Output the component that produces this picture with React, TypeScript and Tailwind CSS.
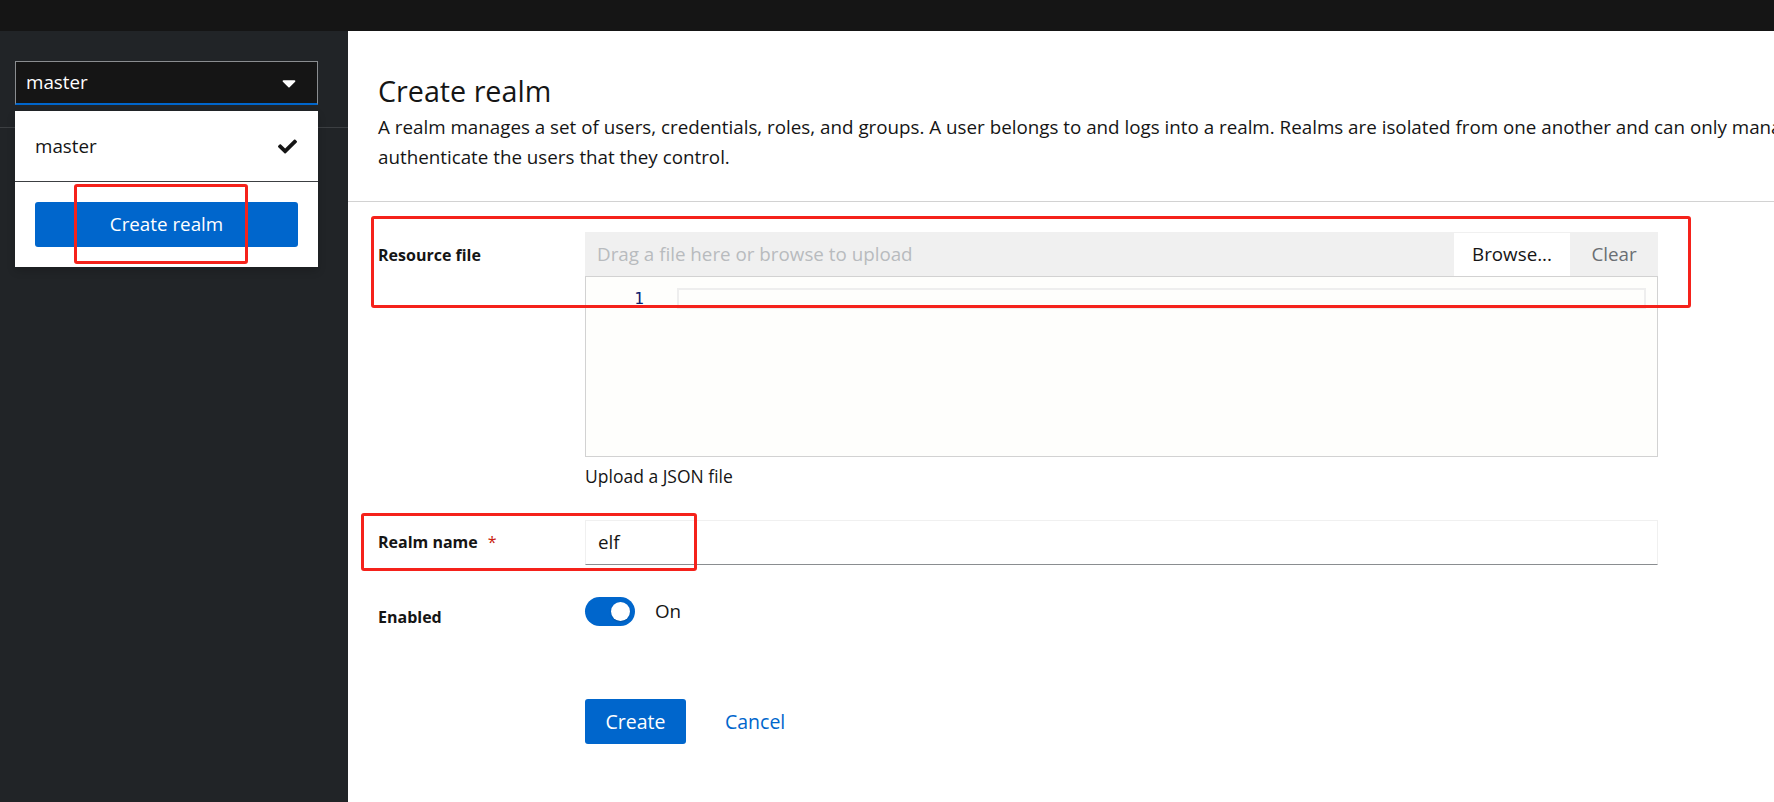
import React from 'react';

const font = { fontFamily: '"Open Sans", "Liberation Sans", sans-serif' };

const Annotation = ({ className }: { className: string }) => (
  <div className={`pointer-events-none absolute rounded-[3px] border-[3px] border-[#f5221b] ${className}`} />
);

const RealmSelector = () => (
  <div className="relative pt-[30px]">
    <div className="ml-[15px] mr-[30px] flex h-[44px] items-center justify-between border border-b-2 border-[#8a8d90] border-b-[#0066cc] bg-[#151515] pl-[10px] pr-[21px]">
      <span className="text-[18.8px] text-white">master</span>
      <svg viewBox="0 0 320 512" className="h-[22px] w-[14px] fill-white">
        <path d="M31.3 192h257.3c17.8 0 26.7 21.5 14.1 34.1L174.1 354.8c-7.8 7.8-20.5 7.8-28.3 0L17.2 226.1C4.6 213.5 13.5 192 31.3 192z" />
      </svg>
    </div>
    <div className="mt-[22px] h-px bg-[#3c3f42]" />

    <div className="absolute left-[15px] top-[80px] w-[303px] bg-white shadow-[0_4px_8px_rgba(3,3,3,0.16)]">
      <div className="flex h-[70px] items-center justify-between pl-[20px] pr-[21px]">
        <span className="text-[18.8px] text-[#151515]">master</span>
        <svg viewBox="0 0 512 512" className="h-[19px] w-[19px] fill-[#151515]">
          <path d="M173.898 439.404l-166.4-166.4c-9.997-9.997-9.997-26.206 0-36.204l36.203-36.204c9.997-9.998 26.207-9.998 36.204 0L192 312.69 432.095 72.596c9.997-9.997 26.207-9.997 36.204 0l36.203 36.204c9.997 9.997 9.997 26.206 0 36.204l-294.4 294.401c-9.998 9.997-26.207 9.997-36.204-.001z" />
        </svg>
      </div>
      <div className="h-px bg-[#3c3f42]" />
      <div className="px-[20px] py-[20px]">
        <button className="flex h-[45px] w-full items-center justify-center rounded-[3px] bg-[#0066cc] text-[18.8px] text-white">
          Create realm
        </button>
      </div>
    </div>
  </div>
);

const FileUpload = () => (
  <div>
    <div className="flex h-[44px] items-stretch bg-[#f0f0f0]">
      <div className="flex flex-1 items-center pl-[12px] text-[18.8px] text-[#b8bbbe]">
        Drag a file here or browse to upload
      </div>
      <button className="mt-px flex w-[116px] items-center justify-center bg-white text-[18.8px] text-[#151515]">
        Browse...
      </button>
      <button className="flex w-[88px] items-center justify-center text-[18.8px] text-[#6a6e73]">Clear</button>
    </div>
    <div className="h-[181px] border border-[#d2d2d2] bg-[#fefefc] pt-[11px]">
      <div className="flex h-[21px] items-center">
        <span
          className="w-[58px] text-right text-[16px] text-[#0b216f]"
          style={{ fontFamily: '"DejaVu Sans Mono", monospace' }}
        >
          1
        </span>
        <div className="ml-[33px] mr-[11px] h-[21px] flex-1 border-2 border-[#eeeeee]" />
      </div>
    </div>
    <p className="mt-[7px] text-[17.5px] leading-[24px] text-[#151515]">Upload a JSON file</p>
  </div>
);

export default function App() {
  return (
    <div className="relative flex h-[802px] w-[1774px] flex-col overflow-hidden bg-white" style={font}>
      <div className="h-[31px] shrink-0 bg-[#151515]" />
      <div className="flex flex-1">
        <aside className="w-[348px] shrink-0 bg-[#212427]">
          <RealmSelector />
        </aside>

        <main className="min-w-0 flex-1 overflow-hidden">
          <section className="border-b border-[#d2d2d2] pb-[29px] pl-[30px] pt-[41px]">
            <h1 className="text-[28.7px] leading-[37px] text-[#151515]">Create realm</h1>
            <div className="mt-[3px] whitespace-nowrap text-[18.8px] leading-[30px] text-[#151515]">
              <p>
                A realm manages a set of users, credentials, roles, and groups. A user belongs to and logs into a realm.
                Realms are isolated from one another and can only manage and
              </p>
              <p>authenticate the users that they control.</p>
            </div>
          </section>

          <form className="w-[1310px] pl-[30px] pt-[30px]">
            <div className="flex">
              <label className="w-[207px] shrink-0 pt-[11px] text-[16px] font-bold leading-[24px] text-[#151515]">
                Resource file
              </label>
              <div className="flex-1">
                <FileUpload />
              </div>
            </div>

            <div className="mt-[32px] flex">
              <label className="w-[207px] shrink-0 pt-[10px] text-[16px] font-bold leading-[24px] text-[#151515]">
                Realm name<span className="ml-[10px] font-normal text-[#c9190b]">*</span>
              </label>
              <div className="flex h-[45px] flex-1 items-center border border-[#f0f0f0] border-b-[#8a8d90] pl-[12px] text-[18.8px] text-[#151515]">
                elf
              </div>
            </div>

            <div className="mt-[32px] flex">
              <label className="w-[207px] shrink-0 pt-[8px] text-[16px] font-bold leading-[24px] text-[#151515]">
                Enabled
              </label>
              <div className="flex h-[29px] items-center">
                <div className="relative h-[29px] w-[50px] rounded-full bg-[#0066cc]">
                  <div className="absolute right-[5px] top-[5px] h-[19px] w-[19px] rounded-full bg-white shadow-[0_1px_2px_rgba(0,0,0,0.2)]" />
                </div>
                <span className="ml-[20px] text-[18.8px] leading-[29px] text-[#151515]">On</span>
              </div>
            </div>

            <div className="mt-[70px] flex items-center pl-[207px]">
              <button type="button" className="h-[45px] w-[101px] rounded-[3px] bg-[#0066cc] text-[19.5px] text-white">
                Create
              </button>
              <button type="button" className="ml-[39px] text-[19.5px] text-[#0066cc]">
                Cancel
              </button>
            </div>
          </form>
        </main>
      </div>

      <Annotation className="left-[74px] top-[184px] h-[80px] w-[174px]" />
      <Annotation className="left-[371px] top-[216px] h-[92px] w-[1320px]" />
      <Annotation className="left-[361px] top-[513px] h-[58px] w-[336px]" />
    </div>
  );
}
